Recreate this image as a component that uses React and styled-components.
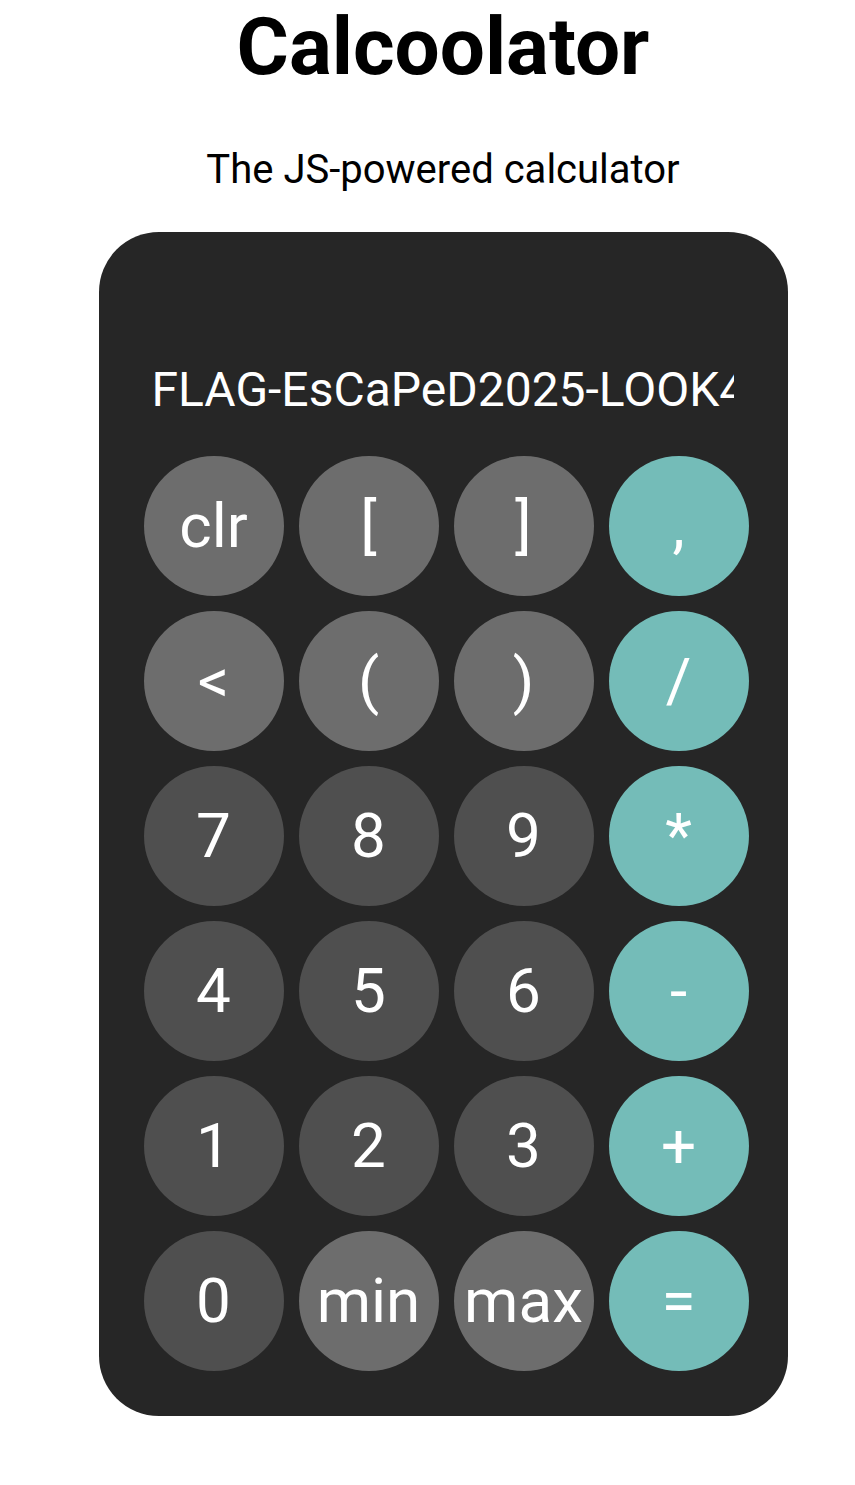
import React from "react";
import styled, { createGlobalStyle } from "styled-components";

const keys = [
  { label: "clr", tone: "light" },
  { label: "[", tone: "light" },
  { label: "]", tone: "light" },
  { label: ",", tone: "accent" },
  { label: "<", tone: "light" },
  { label: "(", tone: "light" },
  { label: ")", tone: "light" },
  { label: "/", tone: "accent" },
  { label: "7", tone: "dark" },
  { label: "8", tone: "dark" },
  { label: "9", tone: "dark" },
  { label: "*", tone: "accent" },
  { label: "4", tone: "dark" },
  { label: "5", tone: "dark" },
  { label: "6", tone: "dark" },
  { label: "-", tone: "accent" },
  { label: "1", tone: "dark" },
  { label: "2", tone: "dark" },
  { label: "3", tone: "dark" },
  { label: "+", tone: "accent" },
  { label: "0", tone: "dark" },
  { label: "min", tone: "light" },
  { label: "max", tone: "light" },
  { label: "=", tone: "accent" },
];

const tones = {
  light: "#6d6d6d",
  dark: "#4f4f4f",
  accent: "#74bcb8",
};

function App() {
  return (
    <>
      <GlobalStyle />
      <Page>
        <Title>Calcoolator</Title>
        <Subtitle>The JS-powered calculator</Subtitle>
        <Calculator>
          <Display>
            <DisplayText>FLAG-EsCaPeD2025-LOOK4</DisplayText>
          </Display>
          <Keypad>
            {keys.map((k) => (
              <Key key={k.label} $tone={k.tone}>
                {k.label}
              </Key>
            ))}
          </Keypad>
        </Calculator>
      </Page>
    </>
  );
}

const GlobalStyle = createGlobalStyle`
  body {
    margin: 0;
    background: #ffffff;
    font-family: Roboto, "Liberation Sans", sans-serif;
  }
`;

const Page = styled.div`
  display: flex;
  flex-direction: column;
  align-items: center;
  padding-left: 31px;
  padding-bottom: 60px;
  text-align: center;
`;

const Title = styled.h1`
  margin: 0;
  font-size: 80px;
  font-weight: 700;
  line-height: normal;
  color: #000;
`;

const Subtitle = styled.p`
  margin: 52px 0 39px;
  font-size: 40px;
  font-weight: 400;
  line-height: normal;
  color: #000;
`;

const Calculator = styled.div`
  box-sizing: border-box;
  width: 689px;
  height: 1184px;
  padding: 130px 39px 0 45px;
  border-radius: 60px;
  background: #262626;
  display: flex;
  flex-direction: column;
`;

const Display = styled.div`
  width: 582px;
  margin-left: 8px;
  margin-bottom: 38px;
  overflow: hidden;
  text-align: left;
`;

const DisplayText = styled.div`
  font-size: 48px;
  line-height: 56px;
  color: #ffffff;
  white-space: nowrap;
`;

const Keypad = styled.div`
  display: grid;
  grid-template-columns: repeat(4, 140px);
  gap: 15px;
`;

const Key = styled.button`
  width: 140px;
  height: 140px;
  padding: 0;
  border: none;
  border-radius: 50%;
  background: ${(props) => tones[props.$tone]};
  color: #ffffff;
  font-family: Roboto, "Liberation Sans", sans-serif;
  font-size: 62px;
  font-weight: 400;
  line-height: 1;
  display: flex;
  align-items: center;
  justify-content: center;
  white-space: nowrap;
  cursor: pointer;
`;

export default App;
